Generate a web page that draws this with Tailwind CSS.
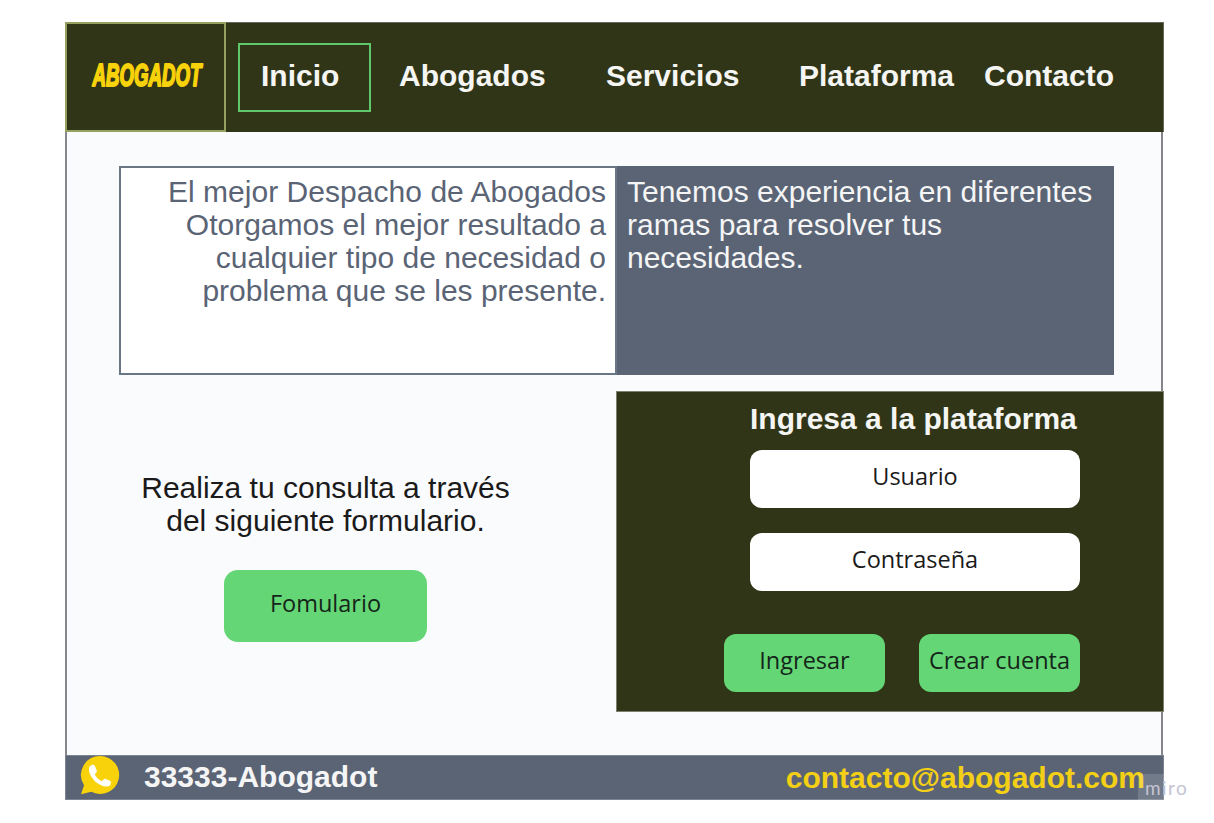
<!DOCTYPE html>
<html lang="es">
<head>
<meta charset="utf-8">
<title>Abogadot</title>
<script src="https://cdn.jsdelivr.net/npm/@tailwindcss/browser@4"></script>
</head>
<body class="bg-white font-['Liberation_Sans',Arial,sans-serif] text-[30px] leading-[33px]">
<div class="h-[823px] w-[1214px] overflow-hidden pl-[65px] pt-[22px]">
  <div class="relative flex h-[778px] w-[1099px] flex-col">
    <header class="flex h-[110px] shrink-0 items-start border-r border-t border-[#66685a] bg-[#313517] font-bold text-[#f5f5f3]">
      <div class="-mt-px flex h-[110px] w-[161px] items-center justify-center border-2 border-[#96a05f]">
        <svg class="h-[50px] w-[130px] overflow-visible" viewBox="0 0 130 50" fill="#f8d20a" stroke="#f8d20a" stroke-width="2" stroke-linejoin="round">
          <text x="11.500" y="34" font-family="'Liberation Sans Narrow','Liberation Sans',sans-serif" font-size="30.500" font-weight="700" font-style="italic" textLength="109" lengthAdjust="spacingAndGlyphs">ABOGADOT</text>
        </svg>
      </div>
      <nav class="flex pt-5">
        <a class="ml-3 h-[69px] w-[133px] border-2 border-[#5fc86c] pl-[21px] pt-[14px]">Inicio</a>
        <a class="ml-[28px] w-[207px] pt-[16px]">Abogados</a>
        <a class="w-[193px] pt-[16px]">Servicios</a>
        <a class="w-[185px] pt-[16px]">Plataforma</a>
        <a class="pt-[16px]">Contacto</a>
      </nav>
    </header>
    <main class="mr-px flex flex-1 flex-col border-x-2 border-[#85878c] bg-[#fafbfd] pt-[34px]">
      <section class="ml-[52px] flex h-[209px] w-[995px] shrink-0">
        <p class="w-[498px] border-2 border-[#6b7685] bg-white pr-[9px] pt-[7px] text-right text-[#5a6475]"><span class="tracking-[0.04px]">El mejor Despacho de Abogados</span><br>Otorgamos el mejor resultado a<br>cualquier tipo de necesidad o<br>problema que se les presente.</p>
        <p class="flex-1 bg-[#5a6475] pl-[10px] pt-[9px] text-[#f5f5f5]">Tenemos experiencia en diferentes<br>ramas para resolver tus<br>necesidades.</p>
      </section>
      <div class="mt-4 flex">
        <section class="flex w-[549px] shrink-0 flex-col items-center pr-[32px] pt-[80px] text-center text-[#1a1a1a]">
          <p>Realiza tu consulta a través<br>del siguiente formulario.</p>
          <button class="mt-[33px] h-[72px] w-[203px] rounded-[14px] bg-[#65d675] pb-[6px] font-['Open_Sans',sans-serif] text-[23.5px] text-[#14251a]">Fomulario</button>
        </section>
        <section class="-mr-[3px] h-[321px] w-[548px] shrink-0 border border-[#7d806c] bg-[#313517]">
          <h2 class="pl-[133px] pt-[10px] font-bold text-[#f5f5f3]">Ingresa a la plataforma</h2>
          <div class="ml-[133px] mt-[15px] flex w-[330px] flex-col gap-[25px] text-center font-['Open_Sans',sans-serif] text-[23.5px] text-[#1a1a1a]">
            <div class="h-[58px] rounded-[12px] bg-white pt-[10px]">Usuario</div>
            <div class="h-[58px] rounded-[12px] bg-white pt-[10px]">Contraseña</div>
          </div>
          <div class="ml-[107px] mt-[43px] flex gap-[34px] text-center font-['Open_Sans',sans-serif] text-[23.5px] text-[#14251a]">
            <div class="h-[58px] w-[161px] rounded-[12px] bg-[#65d675] pt-[10px]">Ingresar</div>
            <div class="h-[58px] w-[161px] whitespace-nowrap rounded-[12px] bg-[#65d675] pt-[10px]">Crear cuenta</div>
          </div>
        </section>
      </div>
    </main>
    <footer class="flex h-[45px] shrink-0 items-start border border-[#7b8490] bg-[#5a6475] pl-[14px] font-bold">
      <svg class="h-[40px] w-[40px]" viewBox="0 0 40 40">
        <path fill="#f8d20a" d="M20.200 0a19 19 0 1 1-8.900 35.800L1 38.200 4 29.200A19 19 0 0 1 20.200 0z"/>
        <path fill="#fff" d="M11.300 9.300c-2 1-2.700 3-2.200 5.700 1.600 8 9.400 15.200 17.500 15.600 2.900.1 4.500-1.500 4.300-4.100-.1-1-.6-1.600-1.500-2l-3.700-1.600c-.9-.3-1.700-.1-2.200.6l-1.500 1.800c-3.200-1.300-5.800-3.800-7.200-7l1.500-1.700c.6-.6.7-1.400.4-2.200l-1.800-4.400c-.6-1.200-1.800-1.500-3.600-.7z"/>
      </svg>
      <span class="ml-[24px] mt-[4px] text-[#f5f5f5]">33333-Abogadot</span>
      <span class="ml-auto mr-[18px] mt-[5px] text-[#f3d016]">contacto@abogadot.com</span>
    </footer>
    <div class="absolute left-[1073px] top-[752px] h-[26px] w-[53px] bg-white/15 pl-[7px] font-['Lato',sans-serif] text-[19px] leading-[28px] tracking-[1.4px] text-[#c4c4d2]">miro</div>
  </div>
</div>
</body>
</html>
